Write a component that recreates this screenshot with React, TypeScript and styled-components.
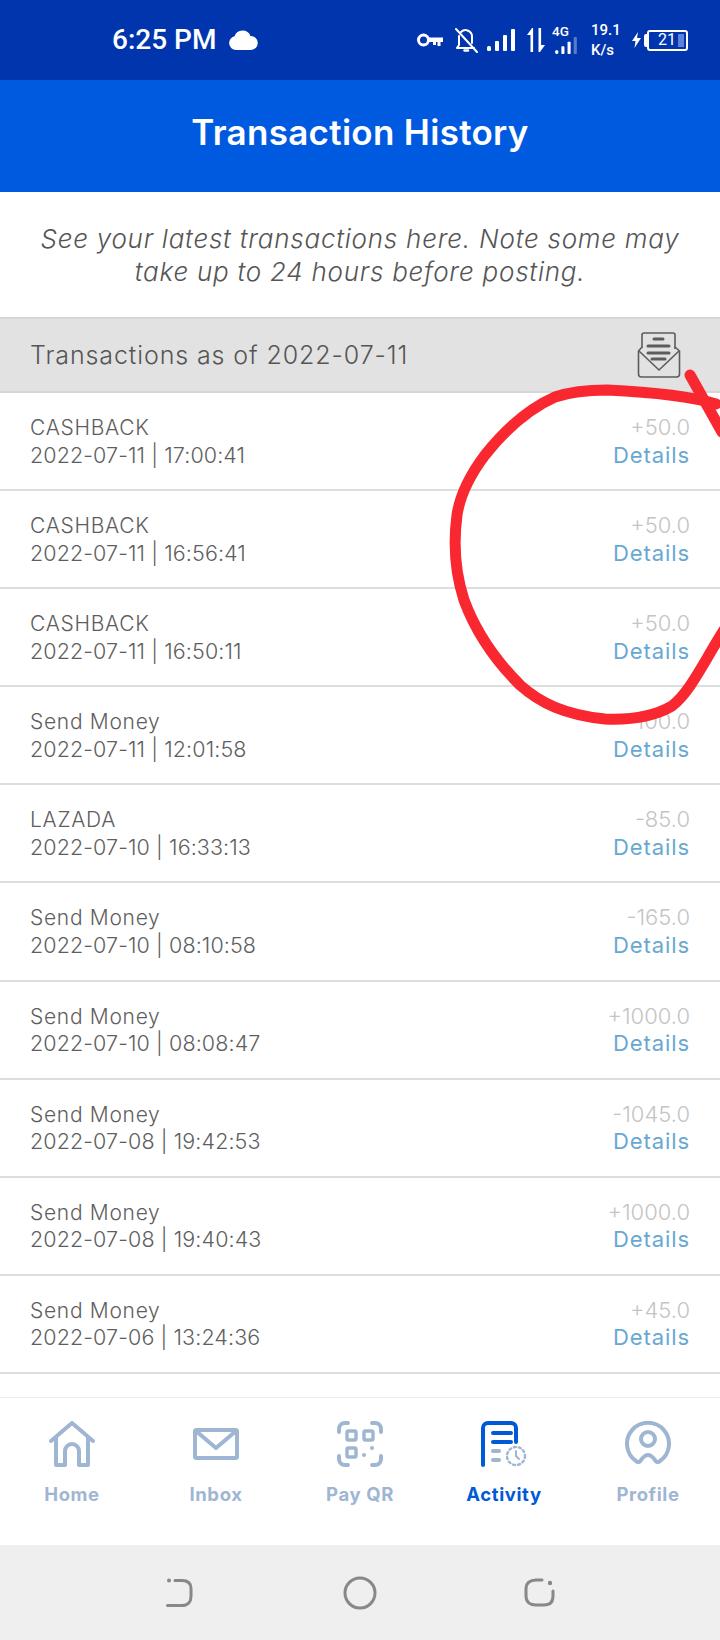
import React from "react";
import styled, { createGlobalStyle } from "styled-components";

const Global = createGlobalStyle`
  html, body { margin: 0; padding: 0; background: #fff; }
  * { box-sizing: border-box; }
`;

const Screen = styled.div`
  position: relative;
  width: 720px;
  height: 1640px;
  display: flex;
  flex-direction: column;
  overflow: hidden;
  background: #fff;
  font-family: Inter, "Liberation Sans", sans-serif;
`;

const StatusBar = styled.div`
  height: 80px;
  flex: none;
  background: #0035ae;
  display: flex;
  align-items: center;
  padding: 0 32px 0 112px;
  color: #fff;
`;

const Clock = styled.span`
  font-family: Roboto, sans-serif;
  font-weight: 500;
  font-size: 28px;
  line-height: 1;
`;

const StatusRight = styled.div`
  margin-left: auto;
  display: flex;
  align-items: center;
`;

const StatusSlot = styled.div<{ $left: number }>`
  margin-left: ${(p) => p.$left}px;
  display: flex;
  align-items: center;
`;

const CellBlock = styled.div`
  display: flex;
  flex-direction: column;
  align-items: flex-start;
  margin-left: 7px;
  width: 29px;
`;

const CellLabel = styled.span`
  font-family: Roboto, sans-serif;
  font-weight: 500;
  font-size: 13.5px;
  line-height: 11px;
  margin-bottom: 0;
`;

const Speed = styled.div`
  font-family: Roboto, sans-serif;
  font-weight: 500;
  font-size: 15px;
  line-height: 20px;
  margin-left: 10px;
  width: 29px;
  white-space: nowrap;
`;

const Battery = styled.div`
  position: relative;
  width: 41px;
  height: 21px;
  border: 2px solid #fff;
  border-radius: 3px;
  display: flex;
  align-items: center;
  padding-left: 9px;
  font-family: Roboto, sans-serif;
  font-size: 16px;
  line-height: 1;
`;

const BatteryFill = styled.span`
  position: absolute;
  right: 2px;
  top: 2px;
  bottom: 2px;
  width: 6px;
  background: #5b83d8;
`;

const BatteryNub = styled.span`
  width: 3px;
  height: 13px;
  margin-left: 3px;
  background: #fff;
  border-radius: 2px 0 0 2px;
`;

const Header = styled.header`
  height: 112px;
  flex: none;
  background: #005adf;
  display: flex;
  align-items: center;
  justify-content: center;
  padding-bottom: 8px;
  color: #fff;
  font-family: Inter, sans-serif;
  font-weight: 600;
  font-size: 35px;
  letter-spacing: 0.3px;
`;

const Intro = styled.p`
  margin: 0;
  height: 125px;
  flex: none;
  display: flex;
  align-items: center;
  justify-content: center;
  text-align: center;
  padding: 2px 10px 0;
  font-family: Inter, sans-serif;
  font-style: italic;
  font-weight: 300;
  font-size: 26px;
  line-height: 32.5px;
  letter-spacing: 0.75px;
  color: #555;
`;

const Band = styled.div`
  height: 76px;
  flex: none;
  background: #e2e2e2;
  border-top: 2px solid #d6d6d6;
  border-bottom: 2px solid #d6d6d6;
  display: flex;
  align-items: center;
  justify-content: space-between;
  padding: 0 39px 0 30px;
  font-size: 25px;
  letter-spacing: 0.9px;
  font-weight: 300;
  color: #555;
`;

const List = styled.div`
  flex: 1;
  min-height: 0;
  overflow: hidden;
`;

const Row = styled.div`
  height: 98.1px;
  border-bottom: 2px solid #dddddd;
  display: flex;
  justify-content: space-between;
  padding: 21px 30px 0;
`;

const Left = styled.div`
  display: flex;
  flex-direction: column;
  color: #5e5e5e;
  font-weight: 300;
`;

const RowTitle = styled.span`
  font-size: 21px;
  line-height: 27.5px;
  letter-spacing: 0.7px;
`;

const RowDate = styled.span`
  font-size: 21.5px;
  line-height: 27.5px;
  letter-spacing: 0.1px;
`;

const Right = styled.div`
  display: flex;
  flex-direction: column;
  align-items: flex-end;
  font-weight: 300;
`;

const Amount = styled.span`
  font-size: 22px;
  line-height: 27.5px;
  color: #c4c4c4;
`;

const Details = styled.span`
  font-size: 22px;
  line-height: 27.5px;
  font-weight: 400;
  letter-spacing: 0.9px;
  color: #67a8d3;
`;

const Nav = styled.nav`
  height: 148px;
  flex: none;
  background: #fff;
  border-top: 1px solid #ececec;
  display: grid;
  grid-template-columns: repeat(5, 1fr);
  padding-top: 23px;
`;

const NavItem = styled.div<{ $active?: boolean }>`
  display: flex;
  flex-direction: column;
  align-items: center;
  gap: 16px;
  font-size: 18.5px;
  line-height: 22px;
  font-weight: 700;
  letter-spacing: 0.6px;
  color: ${(p) => (p.$active ? "#0059d6" : "#9fb6d2")};
`;

const SystemBar = styled.div`
  height: 95px;
  flex: none;
  background: #efefef;
  display: flex;
  align-items: center;
  justify-content: space-between;
  padding: 0 164px 0 165px;
`;

const Overlay = styled.svg`
  position: absolute;
  left: 0;
  top: 0;
  pointer-events: none;
`;

const rows = [
  ["CASHBACK", "2022-07-11 | 17:00:41", "+50.0"],
  ["CASHBACK", "2022-07-11 | 16:56:41", "+50.0"],
  ["CASHBACK", "2022-07-11 | 16:50:11", "+50.0"],
  ["Send Money", "2022-07-11 | 12:01:58", "-100.0"],
  ["LAZADA", "2022-07-10 | 16:33:13", "-85.0"],
  ["Send Money", "2022-07-10 | 08:10:58", "-165.0"],
  ["Send Money", "2022-07-10 | 08:08:47", "+1000.0"],
  ["Send Money", "2022-07-08 | 19:42:53", "-1045.0"],
  ["Send Money", "2022-07-08 | 19:40:43", "+1000.0"],
  ["Send Money", "2022-07-06 | 13:24:36", "+45.0"],
  ["Send Money", "2022-07-06 | 10:11:20", "-100.0"],
];

const navColor = "#9fb6d2";

const HomeIcon = () => (
  <svg width="46" height="46" viewBox="0 0 46 46" fill="none" stroke={navColor} strokeWidth="4" strokeLinecap="round" strokeLinejoin="round">
    <path d="M2 20 23 2l21 18" />
    <path d="M7 17v27h9V30a7 7 0 0 1 14 0v14h9V17" />
  </svg>
);

const InboxIcon = () => (
  <svg width="46" height="46" viewBox="0 0 46 46" fill="none" stroke={navColor} strokeWidth="4" strokeLinecap="round" strokeLinejoin="round">
    <rect x="2" y="9" width="42" height="28" rx="1.5" />
    <path d="M3 10l20 17 20-17" />
  </svg>
);

const QrIcon = () => (
  <svg width="46" height="46" viewBox="0 0 46 46" fill="none" stroke={navColor} strokeWidth="4" strokeLinecap="round" strokeLinejoin="round">
    <path d="M11 2H8a6 6 0 0 0-6 6v3" />
    <path d="M35 2h3a6 6 0 0 1 6 6v3" />
    <path d="M2 35v3a6 6 0 0 0 6 6h3" />
    <path d="M44 35v3a6 6 0 0 1-6 6h-3" />
    <rect x="10" y="10" width="9" height="9" rx="1.5" strokeWidth="3.4" />
    <rect x="27" y="10" width="9" height="9" rx="1.5" strokeWidth="3.4" />
    <rect x="10" y="27" width="9" height="9" rx="1.5" strokeWidth="3.4" />
    <circle cx="35" cy="27" r="1" fill={navColor} strokeWidth="2" />
    <circle cx="27" cy="34" r="1" fill={navColor} strokeWidth="2" />
  </svg>
);

const ActivityIcon = () => (
  <svg width="46" height="46" viewBox="0 0 46 46" fill="none" strokeWidth="4" strokeLinecap="round" strokeLinejoin="round">
    <path d="M2 44V7a5 5 0 0 1 5-5h23a5 5 0 0 1 5 5v14" stroke="#0059d6" />
    <path d="M12 12h18M12 21h18" stroke="#0059d6" />
    <path d="M12 30h6M12 39h6" stroke={navColor} />
    <circle cx="35" cy="35" r="9" stroke={navColor} strokeWidth="2.4" strokeDasharray="2 3" />
    <path d="M35 30v5l3 3" stroke={navColor} strokeWidth="2" />
  </svg>
);

const ProfileIcon = () => (
  <svg width="46" height="46" viewBox="0 0 46 46" fill="none" stroke={navColor} strokeWidth="4" strokeLinecap="round" strokeLinejoin="round">
    <path d="M11 40A21 21 0 1 1 35 40C33 42 31 41 30 39 27 35 25 34 23 34 21 34 19 35 16 39 15 41 13 42 11 40Z" />
    <circle cx="23" cy="18" r="7" />
  </svg>
);

const KeyIcon = () => (
  <svg width="26" height="14" viewBox="0 0 26 14" fill="none">
    <circle cx="6.5" cy="7" r="5" stroke="#fff" strokeWidth="3" />
    <path d="M10 4.5h16v4.5h-2.5v4h-3V9h-1.5v3h-3V9H10Z" fill="#fff" />
  </svg>
);

const BellIcon = () => (
  <svg width="23" height="25" viewBox="0 0 23 25" fill="none" stroke="#fff" strokeWidth="2" strokeLinecap="round" strokeLinejoin="round">
    <path d="M4 8v9l-2 3h17M6 4a6.5 6.5 0 0 1 11 5v6" />
    <path d="M1 1l21 23" />
    <path d="M9.5 22.5h3.5" strokeWidth="2.4" />
  </svg>
);

const SignalBars = ({ w, h, faint }: { w: number; h: number; faint?: boolean }) => (
  <svg width={w} height={h} viewBox="0 0 28 22" fill="#fff">
    <rect x="0" y="17" width="4" height="5" rx="1.5" />
    <rect x="8" y="12" width="4" height="10" rx="1" />
    <rect x="16" y="6" width="4" height="16" rx="1" />
    <rect x="24" y="0" width="4" height="22" rx="1" opacity={faint ? 0.35 : 1} />
  </svg>
);

const ArrowsIcon = () => (
  <svg width="18" height="24" viewBox="0 0 18 24" fill="#fff">
    <path d="M5 0 0 7h3.5v17h2.6V0Z" />
    <path d="M11.5 0h2.6v17H18l-5 7h-1.5Z" />
  </svg>
);

const BoltIcon = () => (
  <svg width="9" height="16" viewBox="0 0 9 16" fill="#fff">
    <path d="M6 0 0 9h3.5L2.5 16 9 6H5Z" />
  </svg>
);

const MailOpenIcon = () => (
  <svg width="44" height="46" viewBox="0 0 44 46" fill="none" stroke="#5c5c5c" strokeWidth="1.6" strokeLinejoin="round">
    <path d="M5 16V3a2 2 0 0 1 2-2h29a2 2 0 0 1 2 2v14" />
    <path d="M5 15 1.5 19v23a3 3 0 0 0 3 3h35a3 3 0 0 0 3-3V19L38 15" />
    <path d="M2 19l20 19 20-19" />
    <path d="M17 7h9M11 14h21M11 21h21M15 27h13" strokeWidth="3" strokeLinecap="round" />
  </svg>
);

const BackIcon = () => (
  <svg width="30" height="30" viewBox="0 0 30 30" fill="none" stroke="#888" strokeWidth="3" strokeLinecap="round">
    <circle cx="4" cy="2.5" r="2" fill="#888" stroke="none" />
    <path d="M10 2.5h7c6 0 9 3 9 8v8c0 5-3 9-9 9H2.5" />
  </svg>
);

const HomeCircleIcon = () => (
  <svg width="34" height="34" viewBox="0 0 34 34" fill="none" stroke="#888" strokeWidth="3">
    <circle cx="17" cy="17" r="15" />
  </svg>
);

const RecentIcon = () => (
  <svg width="32" height="30" viewBox="0 0 32 30" fill="none" stroke="#888" strokeWidth="3" strokeLinecap="round">
    <path d="M18 2h-6C6 2 2 5 2 11v7c0 6 4 9 10 9h8c6 0 9-3 9-9v-5" />
    <circle cx="26" cy="5" r="2.2" fill="#888" stroke="none" />
  </svg>
);

const navItems: [string, React.ReactNode, boolean?][] = [
  ["Home", <HomeIcon />],
  ["Inbox", <InboxIcon />],
  ["Pay QR", <QrIcon />],
  ["Activity", <ActivityIcon />, true],
  ["Profile", <ProfileIcon />],
];

export default function App() {
  return (
    <Screen>
      <Global />
      <StatusBar>
        <Clock>6:25 PM</Clock>
        <StatusSlot $left={12}>
          <svg width="30" height="20" viewBox="0 0 30 20" fill="#fff">
            <path d="M8 20a7 7 0 0 1-1.5-13.8A8.5 8.5 0 0 1 22.5 6 7 7 0 0 1 23 20Z" />
          </svg>
        </StatusSlot>
        <StatusRight>
          <KeyIcon />
          <StatusSlot $left={12}><BellIcon /></StatusSlot>
          <StatusSlot $left={9}><SignalBars w={28} h={22} /></StatusSlot>
          <StatusSlot $left={12}><ArrowsIcon /></StatusSlot>
          <CellBlock>
            <CellLabel>4G</CellLabel>
            <SignalBars w={28} h={17} faint />
          </CellBlock>
          <Speed>19.1<br />K/s</Speed>
          <StatusSlot $left={12}><BoltIcon /></StatusSlot>
          <BatteryNub />
          <Battery>21<BatteryFill /></Battery>
        </StatusRight>
      </StatusBar>
      <Header>Transaction History</Header>
      <Intro>See your latest transactions here. Note some may<br />take up to 24 hours before posting.</Intro>
      <Band>
        <span>Transactions as of 2022-07-11</span>
        <MailOpenIcon />
      </Band>
      <List>
        {rows.map(([title, date, amount], i) => (
          <Row key={i}>
            <Left>
              <RowTitle>{title}</RowTitle>
              <RowDate>{date}</RowDate>
            </Left>
            <Right>
              <Amount>{amount}</Amount>
              <Details>Details</Details>
            </Right>
          </Row>
        ))}
      </List>
      <Nav>
        {navItems.map(([label, icon, active]) => (
          <NavItem key={label} $active={active}>
            {icon}
            {label}
          </NavItem>
        ))}
      </Nav>
      <SystemBar>
        <BackIcon />
        <HomeCircleIcon />
        <RecentIcon />
      </SystemBar>
      <Overlay width="720" height="1640" viewBox="0 0 720 1640" fill="none" stroke="#f9272f" strokeWidth="11" strokeLinecap="round" strokeLinejoin="round">
        <path d="M716 404C690 396 650 392 607 390 585 390 570 392 555 397 530 408 505 430 485 455 470 475 460 495 457 515 453 545 456 575 464 600 475 630 495 660 520 685 540 703 565 715 605 719 630 720 655 716 672 706 690 692 702 665 724 630" />
        <path d="M690 375 722 432" />
      </Overlay>
    </Screen>
  );
}
